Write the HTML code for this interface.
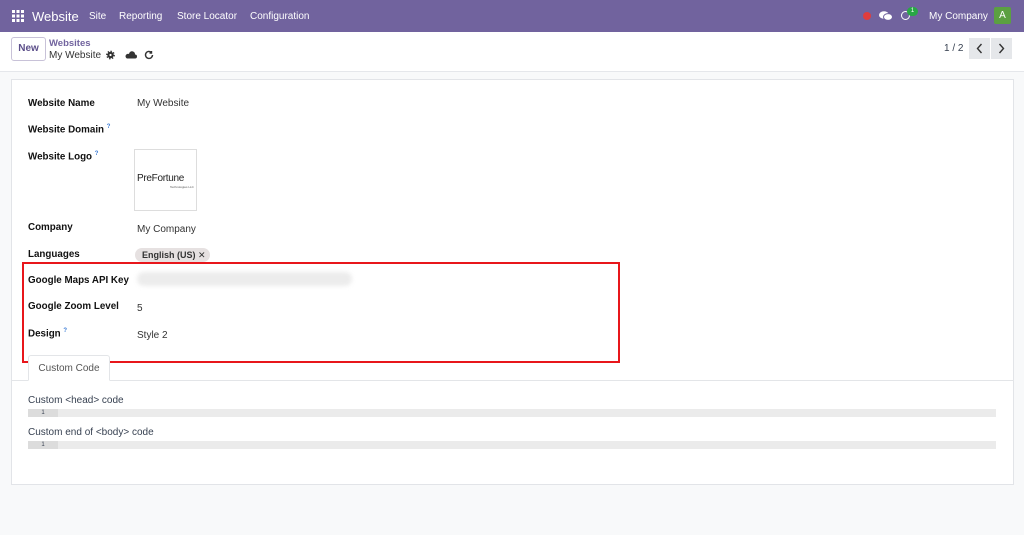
<!DOCTYPE html>
<html><head><meta charset="utf-8"><style>
*{box-sizing:border-box;margin:0;padding:0}
body{width:1024px;height:535px;background:#f8f9fa;font-family:"Liberation Sans","DejaVu Sans",sans-serif;font-size:10px;color:#374151;position:relative;overflow:hidden}
.nav{position:absolute;left:0;top:0;width:1024px;height:32px;background:#71639e;color:#fff}
.nav span{position:absolute;top:11px;font-size:10px}
.ctrl{position:absolute;left:0;top:32px;width:1024px;height:40px;background:#fff;border-bottom:1px solid #e5e7eb}
.sheet{position:absolute;left:11px;top:79px;width:1003px;height:406px;background:#fff;border:1px solid #e2e4e8}
.lbl{position:absolute;left:28px;font-weight:bold;color:#111;font-size:9.8px}
.val{position:absolute;left:137px;font-size:10px;color:#333}
sup{color:#3a7bd5;font-size:6px}
.code{position:absolute;left:28px;width:968px;height:8px;background:#ebebeb}
.code i{position:absolute;left:0;top:0;width:30px;height:8px;background:#dcdcdc;font-style:normal;font-size:6px;text-align:center;line-height:8px}
</style></head><body>
<div class="nav">
<svg style="position:absolute;left:12px;top:10px" width="12" height="12"><g fill="#fff"><rect x="0" y="0" width="3" height="3"/><rect x="4.5" y="0" width="3" height="3"/><rect x="9" y="0" width="3" height="3"/><rect x="0" y="4.5" width="3" height="3"/><rect x="4.5" y="4.5" width="3" height="3"/><rect x="9" y="4.5" width="3" height="3"/><rect x="0" y="9" width="3" height="3"/><rect x="4.5" y="9" width="3" height="3"/><rect x="9" y="9" width="3" height="3"/></g></svg>
<span style="left:32px;top:9px;font-size:13px">Website</span>
<span style="left:89px">Site</span><span style="left:119px">Reporting</span><span style="left:177px">Store Locator</span><span style="left:250px">Configuration</span>
<div style="position:absolute;left:863px;top:12px;width:8px;height:8px;border-radius:50%;background:#e03d3d"></div>
<svg style="position:absolute;left:879px;top:10px" width="14" height="12"><ellipse cx="5" cy="5" rx="5" ry="3.8" fill="#fff"/><ellipse cx="9" cy="7" rx="4.5" ry="3.4" fill="#fff" stroke="#71639e" stroke-width="1"/></svg>
<div style="position:absolute;left:901px;top:11px;width:9px;height:9px;border:1.5px solid #fff;border-radius:50%"></div>
<div style="position:absolute;left:907px;top:7px;width:11px;height:9px;border-radius:5px;background:#28a745;font-size:6px;text-align:center;line-height:9px">1</div>
<span style="left:929px">My Company</span>
<div style="position:absolute;left:994px;top:7px;width:17px;height:17px;background:#5ba041;border-radius:2px;text-align:center;line-height:17px;font-size:10px">A</div>
</div>
<div class="ctrl">
<div style="position:absolute;left:11px;top:5px;width:35px;height:24px;border:1px solid #c8c2d8;border-radius:3px;text-align:center;line-height:22px;color:#5c4f8a;font-weight:bold;font-size:10px">New</div>
<div style="position:absolute;left:49px;top:6px;color:#71639e;font-size:9.5px;font-weight:bold">Websites</div>
<div style="position:absolute;left:49px;top:18px;color:#333;font-size:10px">My Website</div>
<svg style="position:absolute;left:106px;top:18px" width="50" height="10"><circle cx="4.5" cy="5" r="3.2" fill="#333"/><circle cx="4.5" cy="5" r="3.6" fill="none" stroke="#333" stroke-width="1.6" stroke-dasharray="1.4 1.4"/><circle cx="4.5" cy="5" r="1.1" fill="#fff"/><path d="M21 8.5h8a2 2 0 0 0 0-4a3 3 0 0 0-6-0.5a2.2 2.2 0 0 0-2 4.5z" fill="#333"/><path d="M46.5 5a3.5 3.5 0 1 1-1-2.5M45.5 1v2h-2" fill="none" stroke="#333" stroke-width="1.4"/></svg>
<div style="position:absolute;left:944px;top:11px;font-size:10px">1 / 2</div>
<svg style="position:absolute;left:969px;top:6px" width="43" height="21"><rect width="21" height="21" fill="#e5e7ea"/><rect x="22" width="21" height="21" fill="#e5e7ea"/><path d="M12.5 6l-4 4.5 4 4.5M30.5 6l4 4.5-4 4.5" fill="none" stroke="#333" stroke-width="1.4"/></svg>
</div>
<div class="sheet"></div>
<div class="lbl" style="top:98px">Website Name</div><div class="val" style="top:98px">My Website</div>
<div class="lbl" style="top:124px">Website Domain <sup>?</sup></div>
<div class="lbl" style="top:151px">Website Logo <sup>?</sup></div>
<div style="position:absolute;left:134px;top:149px;width:63px;height:62px;border:1px solid #ddd;background:#fff">
<div style="position:absolute;left:2px;top:23px;font-size:10px;color:#222;letter-spacing:-.3px">PreFortune</div>
<div style="position:absolute;left:35px;top:35px;font-size:3px;color:#555">Technologies LLC</div></div>
<div class="lbl" style="top:222px">Company</div><div class="val" style="top:224px">My Company</div>
<div class="lbl" style="top:249px">Languages</div>
<div style="position:absolute;left:135px;top:248px;width:75px;height:14px;background:#e6e1e1;border-radius:7px;font-size:9px;font-weight:bold;line-height:14px;padding-left:7px;color:#333">English (US) ✕</div>
<div class="lbl" style="top:275px">Google Maps API Key</div>
<div style="position:absolute;left:137px;top:272px;width:215px;height:14px;background:#ececec;border-radius:7px;filter:blur(2px)"></div>
<div class="lbl" style="top:301px">Google Zoom Level</div><div class="val" style="top:303px">5</div>
<div class="lbl" style="top:328px">Design <sup>?</sup></div><div class="val" style="top:330px">Style 2</div>
<div style="position:absolute;left:22px;top:262px;width:598px;height:101px;border:2px solid #e8161b"></div>
<div style="position:absolute;left:12px;top:380px;width:1002px;border-top:1px solid #e3e5e8"></div>
<div style="position:absolute;left:28px;top:355px;width:82px;height:26px;border:1px solid #e3e5e8;border-bottom:1px solid #fff;border-radius:3px 3px 0 0;background:#fff;text-align:center;line-height:25px;font-size:10px;color:#555">Custom Code</div>
<div style="position:absolute;left:28px;top:395px;font-size:10px">Custom &lt;head&gt; code</div>
<div class="code" style="top:409px"><i>1</i></div>
<div style="position:absolute;left:28px;top:427px;font-size:10px">Custom end of &lt;body&gt; code</div>
<div class="code" style="top:441px"><i>1</i></div>
</body></html>
